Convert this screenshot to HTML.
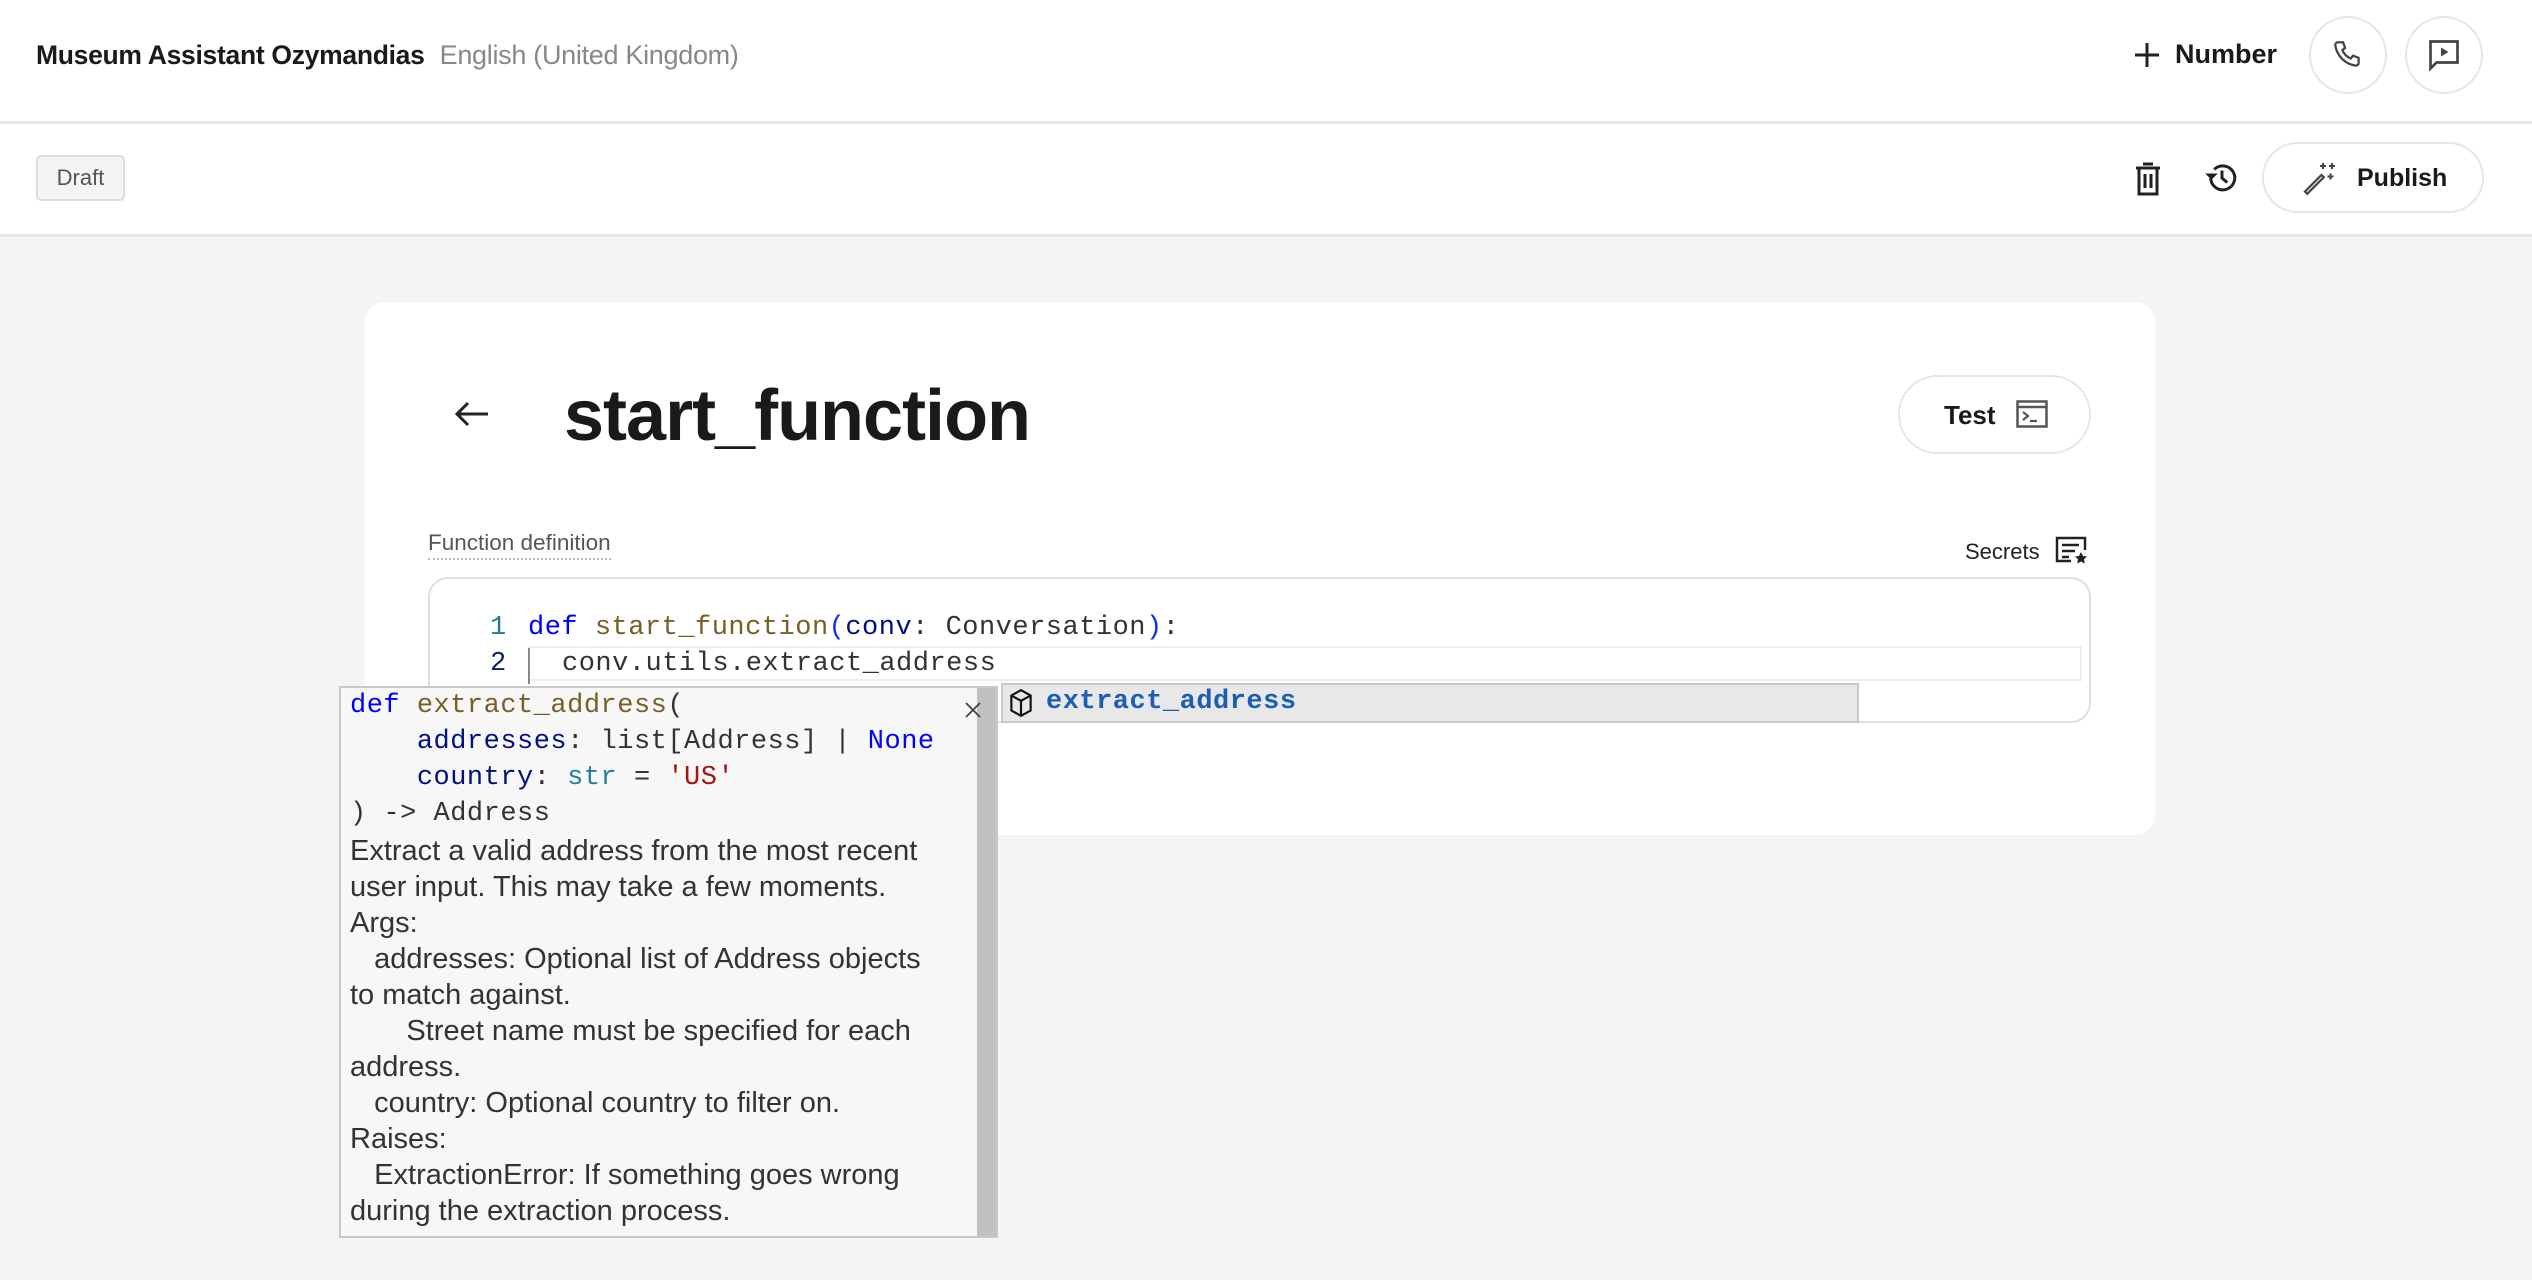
<!DOCTYPE html>
<html><head><meta charset="utf-8"><style>
*{margin:0;padding:0;box-sizing:border-box}
body{width:2532px;height:1280px;background:#f4f4f4;font-family:"Liberation Sans",sans-serif;color:#1a1a1a;position:relative;overflow:hidden}
.a{position:absolute}
.mono{font-family:"Liberation Mono","DejaVu Sans Mono",monospace;font-size:27px;letter-spacing:0.5px;white-space:pre}
.circ{position:absolute;width:78px;height:78px;border:2px solid #e6e6e6;border-radius:50%;background:#fff;display:flex;align-items:center;justify-content:center}
.doc{font-size:29px;line-height:36px;color:#333;white-space:pre}
</style></head><body>
<div class="a" style="left:0;top:0;width:2532px;height:124px;background:#fff;border-bottom:3px solid #e8e8e8"></div>
<div class="a" style="left:0;top:124px;width:2532px;height:113px;background:#fff;border-bottom:3px solid #e8e8e8"></div>
<div class="a" style="left:36px;top:40px;font-size:26.5px;font-weight:bold;letter-spacing:-0.3px">Museum Assistant Ozymandias <span style="font-weight:normal;color:#888;margin-left:8px;font-size:27px">English (United Kingdom)</span></div>
<div class="a" style="left:36px;top:155px;width:89px;height:46px;background:#f4f4f4;border:2px solid #ddd;border-radius:5px;font-size:22px;color:#555;display:flex;align-items:center;justify-content:center">Draft</div>
<svg class="a" style="left:2134px;top:42px" width="26" height="26" viewBox="0 0 26 26"><path d="M13 1V25M1 13H25" stroke="#222" stroke-width="3"/></svg>
<div class="a" style="left:2175px;top:39px;font-size:27px;font-weight:bold">Number</div>
<div class="circ" style="left:2309px;top:16px"><svg width="34" height="34" viewBox="0 0 24 24"><path d="M5 3l3.5 0 1.5 4-2 1.5a11 11 0 0 0 6 6l1.5-2 4 1.5v3.5a2 2 0 0 1-2 2A17 17 0 0 1 3 5a2 2 0 0 1 2-2z" fill="none" stroke="#444" stroke-width="1.6" stroke-linejoin="round"/></svg></div>
<div class="circ" style="left:2405px;top:16px"><svg width="36" height="36" viewBox="0 0 24 24"><path d="M3 3h18v14H7l-4 4z" fill="none" stroke="#444" stroke-width="1.8"/><path d="M10 7l5 3-5 3z" fill="#444"/></svg></div>
<svg class="a" style="left:2134px;top:162px" width="28" height="34" viewBox="0 0 28 34"><path d="M2 6H26M9 2H19M5 6V32H23V6M11 12V26M17 12V26" fill="none" stroke="#222" stroke-width="3"/></svg>
<svg class="a" style="left:2204px;top:160px" width="36" height="36" viewBox="0 0 24 24"><path d="M4.5 12a8 8 0 1 0 2.3-5.7" fill="none" stroke="#222" stroke-width="2"/><path d="M2 9.5l3 3 3-3z" fill="#222" stroke="#222" stroke-width="1"/><path d="M12 7v5l3.5 3" fill="none" stroke="#222" stroke-width="2"/></svg>
<div class="a" style="left:2262px;top:142px;width:222px;height:71px;border:2px solid #e6e6e6;border-radius:36px;background:#fff"></div>
<svg class="a" style="left:2302px;top:160px" width="36" height="36" viewBox="0 0 24 24"><path d="M2 21l11-11 1.5 1.5L3.5 22.5z" fill="none" stroke="#444" stroke-width="1.5"/><path d="M14 2v4M12 4h4M20 2v4M18 4h4M19 9v4M17 11h4" stroke="#444" stroke-width="1.4"/></svg>
<div class="a" style="left:2357px;top:164px;font-size:25px;font-weight:bold">Publish</div>

<div class="a" style="left:365px;top:302px;width:1790px;height:533px;background:#fff;border-radius:20px"></div>
<svg class="a" style="left:454px;top:400px" width="36" height="28" viewBox="0 0 36 28"><path d="M34 14H3M14 3L3 14l11 11" fill="none" stroke="#222" stroke-width="3"/></svg>
<div class="a" style="left:564px;top:375px;font-size:72px;font-weight:bold;letter-spacing:-1px">start_function</div>
<div class="a" style="left:1898px;top:375px;width:193px;height:79px;border:2px solid #e6e6e6;border-radius:40px;background:#fff"></div>
<div class="a" style="left:1944px;top:400px;font-size:26px;font-weight:bold">Test</div>
<svg class="a" style="left:2016px;top:400px" width="32" height="28" viewBox="0 0 32 28"><rect x="1.5" y="1.5" width="29" height="25" fill="none" stroke="#555" stroke-width="2.5"/><path d="M1.5 7H30.5" stroke="#555" stroke-width="2.5"/><path d="M7 12l5 4-5 4M14 21h7" fill="none" stroke="#555" stroke-width="2.2"/></svg>
<div class="a" style="left:428px;top:530px;font-size:22.5px;color:#555;border-bottom:2px dotted #bbb;padding-bottom:2px">Function definition</div>
<div class="a" style="left:1965px;top:539px;font-size:22px;color:#222">Secrets</div>
<svg class="a" style="left:2055px;top:536px" width="34" height="32" viewBox="0 0 34 32"><path d="M16 25H2V2H30V14" fill="none" stroke="#222" stroke-width="2.5"/><path d="M7 9H24M7 15H20M7 21H14" stroke="#222" stroke-width="2.5"/><path d="M26 16l2 4 4 .5-3 2.7.8 4.3-3.8-2-3.8 2 .8-4.3-3-2.7 4-.5z" fill="#222"/></svg>

<div class="a" style="left:428px;top:577px;width:1663px;height:146px;border:2px solid #e0e0e0;border-radius:20px;background:#fff"></div>
<div class="a" style="left:528px;top:646px;width:1554px;height:35px;border:2px solid #eee"></div>
<div class="a" style="left:528px;top:648px;width:2px;height:36px;background:#888"></div>
<div class="a mono" style="left:490px;top:610px;line-height:36px;color:#237893">1</div>
<div class="a mono" style="left:490px;top:646px;line-height:36px;color:#0b216f">2</div>
<div class="a mono" style="left:528px;top:610px;line-height:36px;color:#333"><span style="color:#0000ff">def</span> <span style="color:#795e26">start_function</span><span style="color:#0431fa">(</span><span style="color:#001080">conv</span>: Conversation<span style="color:#0431fa">)</span>:</div>
<div class="a mono" style="left:562px;top:646px;line-height:36px;color:#333">conv.utils.extract_address</div>

<div class="a" style="left:1001px;top:683px;width:858px;height:40px;border:2px solid #c8c8c8;background:#e8e8e8"></div>
<svg class="a" style="left:1008px;top:688px" width="26" height="30" viewBox="0 0 24 28"><path d="M12 2L21 7V21L12 26L3 21V7ZM3 7L12 12L21 7M12 12V26" fill="none" stroke="#111" stroke-width="2"/></svg>
<div class="a mono" style="left:1046px;top:684px;line-height:36px;color:#1a5fb4;font-weight:bold">extract_address</div>

<div class="a" style="left:339px;top:686px;width:659px;height:552px;background:#f7f7f7;border:2px solid #c8c8c8"></div>
<div class="a" style="left:977px;top:688px;width:19px;height:548px;background:#c1c1c1"></div>
<svg class="a" style="left:964px;top:701px" width="18" height="18" viewBox="0 0 18 18"><path d="M2 2L16 16M16 2L2 16" stroke="#444" stroke-width="1.8"/></svg>
<div class="a mono" style="left:350px;top:688px;line-height:36px;color:#333"><span style="color:#0000ff">def</span> <span style="color:#795e26">extract_address</span>(
    <span style="color:#001080">addresses</span>: list[Address] | <span style="color:#0000ff">None</span>
    <span style="color:#001080">country</span>: <span style="color:#267f99">str</span> = <span style="color:#a31515">'US'</span>
) -&gt; Address</div>
<div class="a doc" style="left:350px;top:833px">Extract a valid address from the most recent
user input. This may take a few moments.
Args:
   addresses: Optional list of Address objects
to match against.
       Street name must be specified for each
address.
   country: Optional country to filter on.
Raises:
   ExtractionError: If something goes wrong
during the extraction process.</div>
</body></html>
